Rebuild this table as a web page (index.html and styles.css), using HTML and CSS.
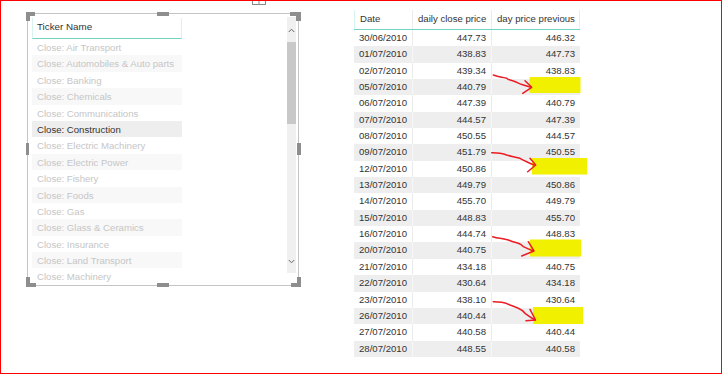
FILE: index.html
```html
<!DOCTYPE html>
<html lang="en">
<head>
<meta charset="utf-8">
<title>Ticker slicer and price table</title>
<link rel="stylesheet" href="styles.css">
</head>
<body>
<div class="frame">
  <div class="slicer">
    <div class="slicer-body">
      <div class="list">
        <div class="list-header">Ticker Name</div>
        <div class="items">
          <div class="item">Close: Air Transport</div>
          <div class="item alt">Close: Automobiles &amp; Auto parts</div>
          <div class="item">Close: Banking</div>
          <div class="item alt">Close: Chemicals</div>
          <div class="item">Close: Communications</div>
          <div class="item selected">Close: Construction</div>
          <div class="item">Close: Electric Machinery</div>
          <div class="item alt">Close: Electric Power</div>
          <div class="item">Close: Fishery</div>
          <div class="item alt">Close: Foods</div>
          <div class="item">Close: Gas</div>
          <div class="item alt">Close: Glass &amp; Ceramics</div>
          <div class="item">Close: Insurance</div>
          <div class="item alt">Close: Land Transport</div>
          <div class="item">Close: Machinery</div>
        </div>
      </div>
      <div class="scrollbar">
        <div class="sb-btn"><svg width="7" height="5" viewBox="0 0 7 5"><polyline points="0.8,4 3.5,1.2 6.2,4" fill="none" stroke="#666" stroke-width="1"/></svg></div>
        <div class="sb-thumb"></div>
        <div class="sb-space"></div>
        <div class="sb-btn sb-down"><svg width="7" height="5" viewBox="0 0 7 5"><polyline points="0.8,1 3.5,3.8 6.2,1" fill="none" stroke="#666" stroke-width="1"/></svg></div>
      </div>
    </div>
    <span class="h h-tl-x"></span><span class="h h-tl-y"></span>
    <span class="h h-tr-x"></span><span class="h h-tr-y"></span>
    <span class="h h-bl-x"></span><span class="h h-bl-y"></span>
    <span class="h h-br-x"></span><span class="h h-br-y"></span>
    <span class="h h-top"></span><span class="h h-bottom"></span>
    <span class="h h-left"></span><span class="h h-right"></span>
  </div>

  <div class="grid">
    <div class="grid-head">
      <div class="c c1">Date</div>
      <div class="c c2">daily close price</div>
      <div class="c c3">day price previous</div>
    </div>
    <div class="row"><div class="c c1">30/06/2010</div><div class="c c2 num">447.73</div><div class="c c3 num">446.32</div></div>
    <div class="row alt"><div class="c c1">01/07/2010</div><div class="c c2 num">438.83</div><div class="c c3 num">447.73</div></div>
    <div class="row"><div class="c c1">02/07/2010</div><div class="c c2 num">439.34</div><div class="c c3 num">438.83</div></div>
    <div class="row alt"><div class="c c1">05/07/2010</div><div class="c c2 num">440.79</div><div class="c c3 num"></div></div>
    <div class="row"><div class="c c1">06/07/2010</div><div class="c c2 num">447.39</div><div class="c c3 num">440.79</div></div>
    <div class="row alt"><div class="c c1">07/07/2010</div><div class="c c2 num">444.57</div><div class="c c3 num">447.39</div></div>
    <div class="row"><div class="c c1">08/07/2010</div><div class="c c2 num">450.55</div><div class="c c3 num">444.57</div></div>
    <div class="row alt"><div class="c c1">09/07/2010</div><div class="c c2 num">451.79</div><div class="c c3 num">450.55</div></div>
    <div class="row"><div class="c c1">12/07/2010</div><div class="c c2 num">450.86</div><div class="c c3 num"></div></div>
    <div class="row alt"><div class="c c1">13/07/2010</div><div class="c c2 num">449.79</div><div class="c c3 num">450.86</div></div>
    <div class="row"><div class="c c1">14/07/2010</div><div class="c c2 num">455.70</div><div class="c c3 num">449.79</div></div>
    <div class="row alt"><div class="c c1">15/07/2010</div><div class="c c2 num">448.83</div><div class="c c3 num">455.70</div></div>
    <div class="row"><div class="c c1">16/07/2010</div><div class="c c2 num">444.74</div><div class="c c3 num">448.83</div></div>
    <div class="row alt"><div class="c c1">20/07/2010</div><div class="c c2 num">440.75</div><div class="c c3 num"></div></div>
    <div class="row"><div class="c c1">21/07/2010</div><div class="c c2 num">434.18</div><div class="c c3 num">440.75</div></div>
    <div class="row alt"><div class="c c1">22/07/2010</div><div class="c c2 num">430.64</div><div class="c c3 num">434.18</div></div>
    <div class="row"><div class="c c1">23/07/2010</div><div class="c c2 num">438.10</div><div class="c c3 num">430.64</div></div>
    <div class="row alt"><div class="c c1">26/07/2010</div><div class="c c2 num">440.44</div><div class="c c3 num"></div></div>
    <div class="row"><div class="c c1">27/07/2010</div><div class="c c2 num">440.58</div><div class="c c3 num">440.44</div></div>
    <div class="row alt"><div class="c c1">28/07/2010</div><div class="c c2 num">448.55</div><div class="c c3 num">440.58</div></div>
  </div>

  <svg class="annot" width="723" height="374" viewBox="0 0 723 374">
    <rect x="250" y="0" width="18" height="6" fill="#fff"/>
    <rect x="252.5" y="-3.5" width="13" height="8" fill="none" stroke="#8a8a8a" stroke-width="1"/>
    <line x1="259" y1="0" x2="259" y2="4.5" stroke="#8a8a8a" stroke-width="1"/>
    <line x1="252.5" y1="0.5" x2="265.5" y2="0.5" stroke="#8a8a8a" stroke-width="1"/>

    <rect x="529.5" y="77" width="51" height="16" fill="#f0f000"/>
    <rect x="532" y="158" width="55" height="16.5" fill="#f0f000"/>
    <rect x="530" y="239.5" width="51" height="17" fill="#f0f000"/>
    <rect x="533" y="307" width="50" height="17" fill="#f0f000"/>

    <g fill="none" stroke="#ec1c24" stroke-width="1.5" stroke-linecap="round" stroke-linejoin="round">
      <path d="M493.3,75 Q497,76.5 501.7,77.3 T506.7,78.3 Q508,79.5 510,80 T516.7,82.3 Q520,84 523.3,85 T531,87.3"/>
      <path d="M525,80.7 L531.7,87.3 L522.7,93.3"/>
      <path d="M491.7,152.7 Q496,152.6 500,153.3 T506.7,155 Q510,156 513.3,156.7 T520,158.3 Q523,160 526.7,161.7 T534,165"/>
      <path d="M530,158.3 L535.7,165 L527.7,171.7"/>
      <path d="M492.7,236.7 Q496,237.8 500,238.3 T508.3,240 Q512,241.5 516.7,242.7 T523.3,246.7 Q528,249 533.3,251"/>
      <path d="M528.3,241.7 L534,251 L521.7,256"/>
      <path d="M493.3,301.7 Q497,301.6 501.7,302.3 T510,305 Q514,306.5 518.3,308.3 T525,313.3 Q530,317 535,320"/>
      <path d="M530,309.3 L535.5,320 L526,320.7"/>
    </g>
  </svg>
</div>
</body>
</html>
```

FILE: styles.css
```css
* {
  box-sizing: border-box;
}

html,
body {
  margin: 0;
  background: #ffffff;
}

body {
  font-family: "Liberation Sans", Arial, sans-serif;
  font-size: 9.6px;
  color: #333333;
}

.frame {
  position: relative;
  width: 722px;
  height: 374px;
  border: 1px solid #ff0000;
  display: flex;
  align-items: flex-start;
  padding: 9px 0 0 26px;
  overflow: hidden;
}

/* ---------- slicer ---------- */
.slicer {
  position: relative;
  flex: none;
  width: 272px;
  height: 273px;
  margin-top: 3px;
  border: 1px solid #c4c4c4;
  padding: 3px 2px 0 4px;
}

.slicer-body {
  display: flex;
  height: 100%;
}

.list {
  width: 150px;
  margin-top: 1px;
  height: 267px;
  overflow: hidden;
}

.list-header {
  height: 21px;
  line-height: 17px;
  padding-left: 4px;
  border-left: 1px solid #d6f3ef;
  border-right: 1px solid #d6f3ef;
  border-bottom: 1px solid #72d3c7;
  color: #333333;
  font-size: 9.8px;
}

.item {
  height: 16.4px;
  line-height: 15.4px;
  padding: 1px 0 0 5px;
  color: #c6c6c6;
  white-space: nowrap;
  background: #ffffff;
}

.item.alt {
  background: #f8f8f8;
}

.item.selected {
  background: #eeeeee;
  color: #333333;
}

.scrollbar {
  margin-left: auto;
  width: 9px;
  height: 256px;
  background: #f0f0f0;
  display: flex;
  flex-direction: column;
}

.sb-btn {
  height: 25px;
  display: flex;
  align-items: center;
  justify-content: center;
  padding-top: 1px;
}

.sb-btn svg {
  display: block;
}

.sb-down {
  height: 24px;
  padding-top: 0;
}

.sb-thumb {
  height: 82px;
  background: #c8c8c8;
}

.sb-space {
  flex: 1;
}

/* selection handles */
.h {
  position: absolute;
  background: #8e8e8e;
}

.h-tl-x { left: -2px; top: -2px; width: 9px; height: 4px; }
.h-tl-y { left: -2px; top: -2px; width: 4px; height: 9px; }
.h-tr-x { right: -3px; top: -2px; width: 11px; height: 4px; }
.h-tr-y { right: -3px; top: -2px; width: 5px; height: 9px; }
.h-bl-x { left: -2px; bottom: -2px; width: 10px; height: 4px; }
.h-bl-y { left: -2px; bottom: -2px; width: 4px; height: 10px; }
.h-br-x { right: -3px; bottom: -2px; width: 10px; height: 4px; }
.h-br-y { right: -3px; bottom: -2px; width: 4px; height: 10px; }
.h-top { left: 129px; top: -2px; width: 12px; height: 4px; }
.h-bottom { left: 129px; bottom: -2px; width: 12px; height: 4px; }
.h-left { left: -2px; top: 129px; width: 3px; height: 12px; }
.h-right { right: -3px; top: 129px; width: 4px; height: 12px; }

/* ---------- table ---------- */
.grid {
  flex: none;
  margin-left: 55px;
  width: 226px;
}

.grid-head,
.row {
  display: grid;
  grid-template-columns: 59px 79px 88px;
}

.grid-head {
  height: 20px;
  border-bottom: 1px solid #72d3c7;
}

.grid-head .c {
  line-height: 17px;
  padding-left: 5px;
  border-right: 1px solid #ececec;
  white-space: nowrap;
}

.grid-head .c1 {
  border-left: 1px solid #d6f3ef;
  padding-left: 5px;
}

.row {
  height: 16.35px;
  background: #ffffff;
}

.row.alt {
  background: #eeeeee;
}

.row .c {
  line-height: 16.35px;
  white-space: nowrap;
}

.row .c1 {
  padding-left: 5px;
  border-right: 1px solid #ececec;
}

.row .c2 {
  border-right: 1px solid #ececec;
}

.row.alt .c1,
.row.alt .c2 {
  border-right-color: #f7f7f7;
}

.num {
  text-align: right;
  padding-right: 5px;
}

/* ---------- annotation overlay ---------- */
.annot {
  position: absolute;
  left: -1px;
  top: -1px;
  pointer-events: none;
}
```
